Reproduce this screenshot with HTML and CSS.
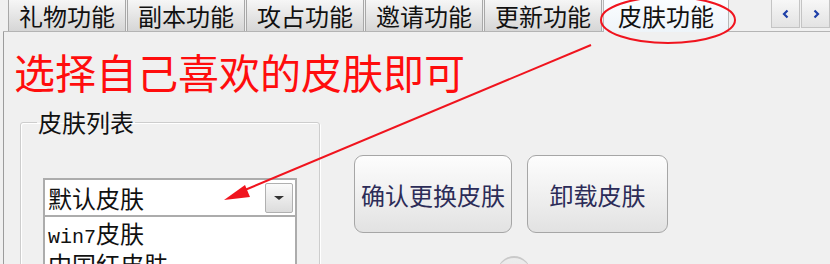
FILE: index.html
```html
<!DOCTYPE html>
<html lang="zh-CN">
<head>
    <meta charset="UTF-8">
    <meta name="viewport" content="width=device-width, initial-scale=1.0">
    <title>皮肤功能</title>

    <link rel="stylesheet" href="styles.css">

</head>
<body>

    <div id="tabbar">
        <div class="tab">礼物功能</div>
        <div class="tab">副本功能</div>
        <div class="tab">攻占功能</div>
        <div class="tab">邀请功能</div>
        <div class="tab">更新功能</div>
        <div class="tab tab-active">皮肤功能</div>

        <div class="scroller">
            <div class="scroll-btn">
                <svg width="10" height="10" viewBox="0 0 10 10"><path d="M6.5 1.5 L3 5 L6.5 8.5" fill="none" stroke="#1d3fa8" stroke-width="2.2"/></svg>
            </div>
            <div class="scroll-btn">
                <svg width="10" height="10" viewBox="0 0 10 10"><path d="M3.5 1.5 L7 5 L3.5 8.5" fill="none" stroke="#1d3fa8" stroke-width="2.2"/></svg>
            </div>
        </div>
    </div>

    <div id="panel">
        <p class="hint">选择自己喜欢的皮肤即可</p>

        <div class="row">
            <fieldset class="group">
                <legend>皮肤列表</legend>

                <div class="combo">
                    <span class="combo-text">默认皮肤</span>
                    <span class="combo-btn"><span class="caret"></span></span>
                </div>
                <div class="list">
                    <div class="item"><span class="latin">win7</span>皮肤</div>
                    <div class="item">中国红皮肤</div>
                </div>
            </fieldset>

            <div class="actions">
                <div class="btn-row">
                    <button class="btn btn-wide">确认更换皮肤</button>
                    <button class="btn">卸载皮肤</button>
                </div>
                <div class="knob"></div>
            </div>
        </div>
    </div>

    <!-- red annotation drawn over the screenshot -->
    <svg id="marks" width="830" height="264" viewBox="0 0 830 264">
        <ellipse cx="668" cy="20" rx="67" ry="23" fill="none" stroke="#f0141e" stroke-width="2"/>
        <line x1="591" y1="45" x2="240" y2="192" stroke="#f0141e" stroke-width="2"/>
        <polygon points="224,200 245,185 250,197" fill="#f0141e"/>
    </svg>

</body>
</html>
```

FILE: styles.css
```css
html, body{
    height: 264px;
    overflow: hidden;
}
body{
    margin: 0;
    position: relative;
    background-color: #f0f0f0;
    font-family: "Noto Sans CJK SC", "Noto Sans", sans-serif;
    color: #111;
}

#tabbar{
    display: flex;
    align-items: flex-start;
    height: 31px;
    margin-left: 3px;
    padding-left: 5px;
    border-bottom: 1px solid #b4b4b4;
}
.tab{
    box-sizing: border-box;
    height: 31px;
    padding: 0 10px;
    margin-right: 1px;
    font-size: 24px;
    line-height: 31px;
    border: 1px solid #a8a8a8;
    border-top: none;
    border-bottom: none;
    background: linear-gradient(#f6f6f6, #e4e4e4 55%, #d6d6d6);
}
.tab-active{
    height: 32px;
    margin-bottom: -1px;
    padding: 0 14px;
    background: linear-gradient(#fbfdff, #eef4f9);
    border-color: #b8b8b8;
}
.scroller{
    display: flex;
    gap: 1px;
    margin-left: auto;
}
.scroll-btn{
    box-sizing: border-box;
    width: 29px;
    height: 28px;
    display: flex;
    align-items: center;
    justify-content: center;
    border: 1px solid #c4c4c4;
    border-top: none;
    background: linear-gradient(#f7f7f7, #e3e3e3);
}

#panel{
    box-sizing: border-box;
    height: 232px;
    overflow: hidden;
    margin-left: 3px;
    padding-left: 10px;
    border-left: 1px solid #9c9c9c;
}
.hint{
    margin: 19px 0 0;
    color: #ff0d0d;
    font-size: 41px;
    line-height: 41px;
}

.row{
    display: flex;
    align-items: flex-start;
}
.group{
    box-sizing: border-box;
    width: 300px;
    height: 200px;
    margin: 18px 0 0 6px;
    padding: 0 0 0 22px;
    border: 1px solid #cdcdcd;
    border-radius: 3px;
    box-shadow: inset 1px 1px 0 #fff, 1px 1px 0 #fff;
}
.group legend{
    margin-left: -6px;
    padding: 0 1px;
    font-size: 24px;
    line-height: 24px;
}

.combo{
    box-sizing: border-box;
    display: flex;
    align-items: center;
    width: 254px;
    height: 39px;
    margin-top: 44px;
    padding-left: 3px;
    border: 2px solid #acacac;
    background-color: #fff;
    font-size: 24px;
}
.combo-btn{
    box-sizing: border-box;
    display: flex;
    align-items: center;
    justify-content: center;
    width: 28px;
    height: 30px;
    margin: 0 2px 0 auto;
    border: 1px solid #b0b0b0;
    border-radius: 2px;
    background: linear-gradient(#fafafa, #dcdcdc);
}
.caret{
    width: 0;
    height: 0;
    border-left: 5px solid transparent;
    border-right: 5px solid transparent;
    border-top: 4px solid #333;
}
.list{
    box-sizing: border-box;
    width: 254px;
    height: 60px;
    padding: 3px 0 0 3px;
    border: 2px solid #acacac;
    border-top: none;
    background-color: #fff;
    font-size: 24px;
    line-height: 26px;
}
.latin{
    font-family: "Liberation Mono", monospace;
    font-size: 20px;
}

.actions{
    margin: 63px 0 0 34px;
}
.btn-row{
    display: flex;
    gap: 15px;
}
.btn{
    box-sizing: border-box;
    width: 141px;
    height: 78px;
    padding: 0;
    border: 1px solid #a6a6a6;
    border-radius: 9px;
    background: linear-gradient(#fdfdfd, #f0f0f0 50%, #e2e2e2);
    color: #2c2c58;
    font-family: "Noto Sans CJK SC", sans-serif;
    font-size: 24px;
}
.btn-wide{
    width: 158px;
}
.knob{
    width: 34px;
    height: 34px;
    margin: 23px 0 0 143px;
    border-radius: 50%;
    border-top: 2px solid #c9c9c9;
    background: linear-gradient(#ececec, #e4e4e4);
}

#marks{
    position: absolute;
    top: 0;
    left: 0;
    pointer-events: none;
}
```
